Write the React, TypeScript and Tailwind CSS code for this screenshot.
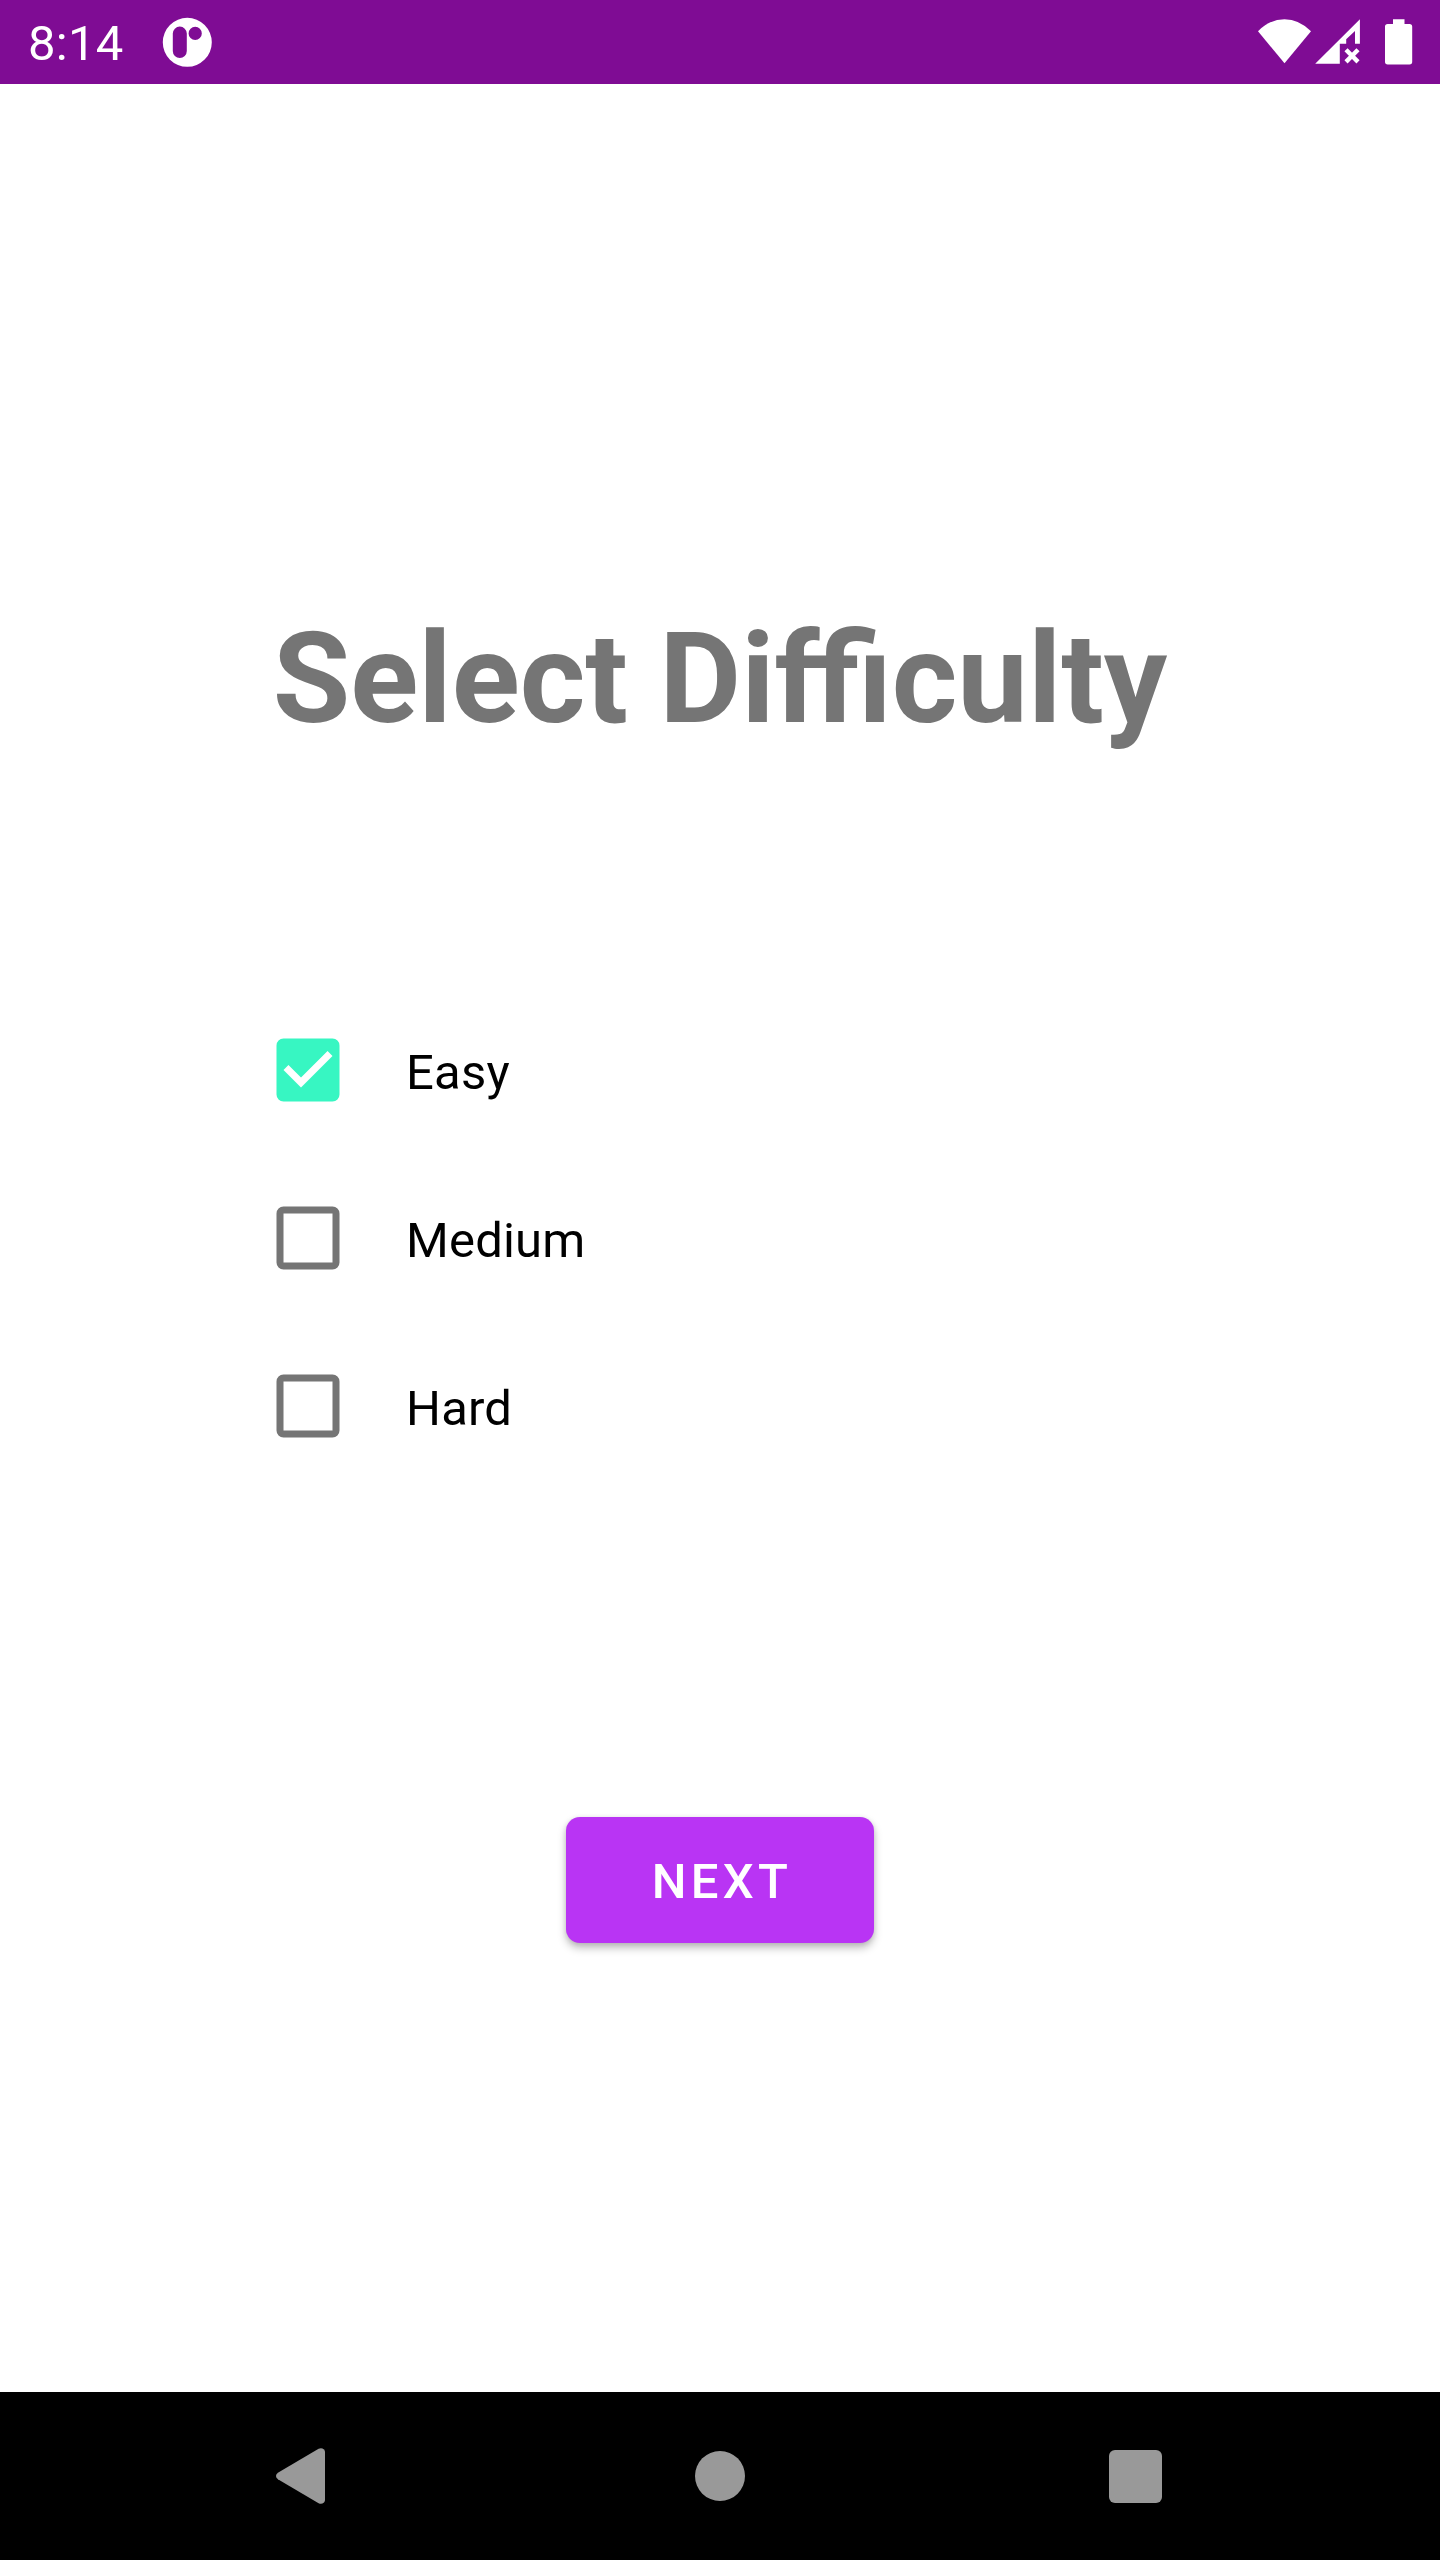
import { useState } from "react";

function StatusBar() {
  return (
    <header className="flex h-[84px] shrink-0 items-start bg-[#7f0c94] text-white">
      <span className="ml-[28px] mt-[15px] w-[132px] text-[49px] leading-[57px] tracking-[0.25px]">8:14</span>
      <svg className="h-[84px] w-[54px]" viewBox="160 0 54 84" fill="currentColor">
        <path
          fillRule="evenodd"
          d="M187.3 17.8a24.5 24.5 0 1 0 0 49a24.5 24.5 0 1 0 0-49zM179.8 26.6a7 7 0 0 1 7 7v17.4a7 7 0 0 1-14 0v-17.4a7 7 0 0 1 7-7zM195.2 26.8a6.6 6.6 0 1 1 0 13.2a6.6 6.6 0 1 1 0-13.2z"
        />
      </svg>
      <svg className="ml-auto h-[84px] w-[190px]" viewBox="1250 0 190 84" fill="currentColor">
        <path d="M1258 31.2Q1270 19.2 1284.5 19.2T1311 31.2L1284.5 63.3z" />
        <path d="M1315.2 63.8L1359.9 19.2V43.8H1355V31L1346.2 39.3V43.8H1339.8V63.8z" />
        <path d="M1346 49.7L1358 61.9M1358 49.7L1346 61.9" stroke="currentColor" strokeWidth="4.4" />
        <path d="M1393 19.2h11.5v4.7h5a2.7 2.7 0 0 1 2.7 2.7v35.2a2.7 2.7 0 0 1-2.7 2.7h-21.8a2.7 2.7 0 0 1-2.7-2.7v-35.2a2.7 2.7 0 0 1 2.7-2.7h5.3z" />
      </svg>
    </header>
  );
}

function CheckRow({ label, checked, onSelect }: { label: string; checked: boolean; onSelect: () => void }) {
  return (
    <button role="checkbox" aria-checked={checked} onClick={onSelect} className="flex h-[168px] items-center text-left">
      <svg className="size-[84px] shrink-0" viewBox="0 0 24 24">
        {checked ? (
          <path
            fill="#37f6c2"
            d="M19 3H5a2 2 0 0 0-2 2v14a2 2 0 0 0 2 2h14a2 2 0 0 0 2-2V5a2 2 0 0 0-2-2zM10 17l-5-5l1.41-1.41L10 14.17l7.59-7.59L19 8z"
          />
        ) : (
          <path
            fill="#757575"
            fillRule="evenodd"
            d="M19 5v14H5V5h14zm0-2H5a2 2 0 0 0-2 2v14a2 2 0 0 0 2 2h14a2 2 0 0 0 2-2V5a2 2 0 0 0-2-2z"
          />
        )}
      </svg>
      <span className="ml-[56px] mt-[4px] text-[49px] leading-[57px] tracking-[0.2px] text-black">{label}</span>
    </button>
  );
}

function NavigationBar() {
  return (
    <nav className="flex h-[168px] shrink-0 items-center justify-between bg-black pl-[276px] pr-[278.5px] text-[#999999]">
      <svg className="h-[56px] w-[49px]" viewBox="0 0 49 56" fill="currentColor">
        <path d="M1.9 24.8L42.6.8Q45.5-.8 48 1.6Q49 2.8 49 4V52Q49 53.2 48 54.4Q45.5 56.8 42.6 55.2L1.9 31.2Q0 30 0 28T1.9 24.8z" />
      </svg>
      <div className="ml-[6px] size-[50px] rounded-full bg-current" />
      <div className="size-[53px] rounded-[6px] bg-current" />
    </nav>
  );
}

export default function App() {
  const [level, setLevel] = useState("Easy");
  return (
    <div className="flex h-[2560px] w-[1440px] flex-col overflow-hidden bg-white font-['Roboto',sans-serif]">
      <StatusBar />
      <main className="flex grow flex-col items-center">
        <h1 className="mt-[521px] whitespace-nowrap text-[126px] font-bold leading-[148px] text-[#757575]">
          Select Difficulty
        </h1>
        <div className="mt-[233px] flex w-[908px] flex-col">
          {["Easy", "Medium", "Hard"].map((name) => (
            <CheckRow key={name} label={name} checked={level === name} onSelect={() => setLevel(name)} />
          ))}
        </div>
        <button className="mt-[327px] h-[126px] w-[308px] rounded-[14px] bg-[#b934f4] pb-[1px] pl-[4px] pt-[3px] text-[49px] font-medium leading-[57px] tracking-[4.37px] text-white shadow-[0_5px_9px_rgba(0,0,0,0.25),0_1px_5px_rgba(0,0,0,0.1)]">
          NEXT
        </button>
      </main>
      <NavigationBar />
    </div>
  );
}
